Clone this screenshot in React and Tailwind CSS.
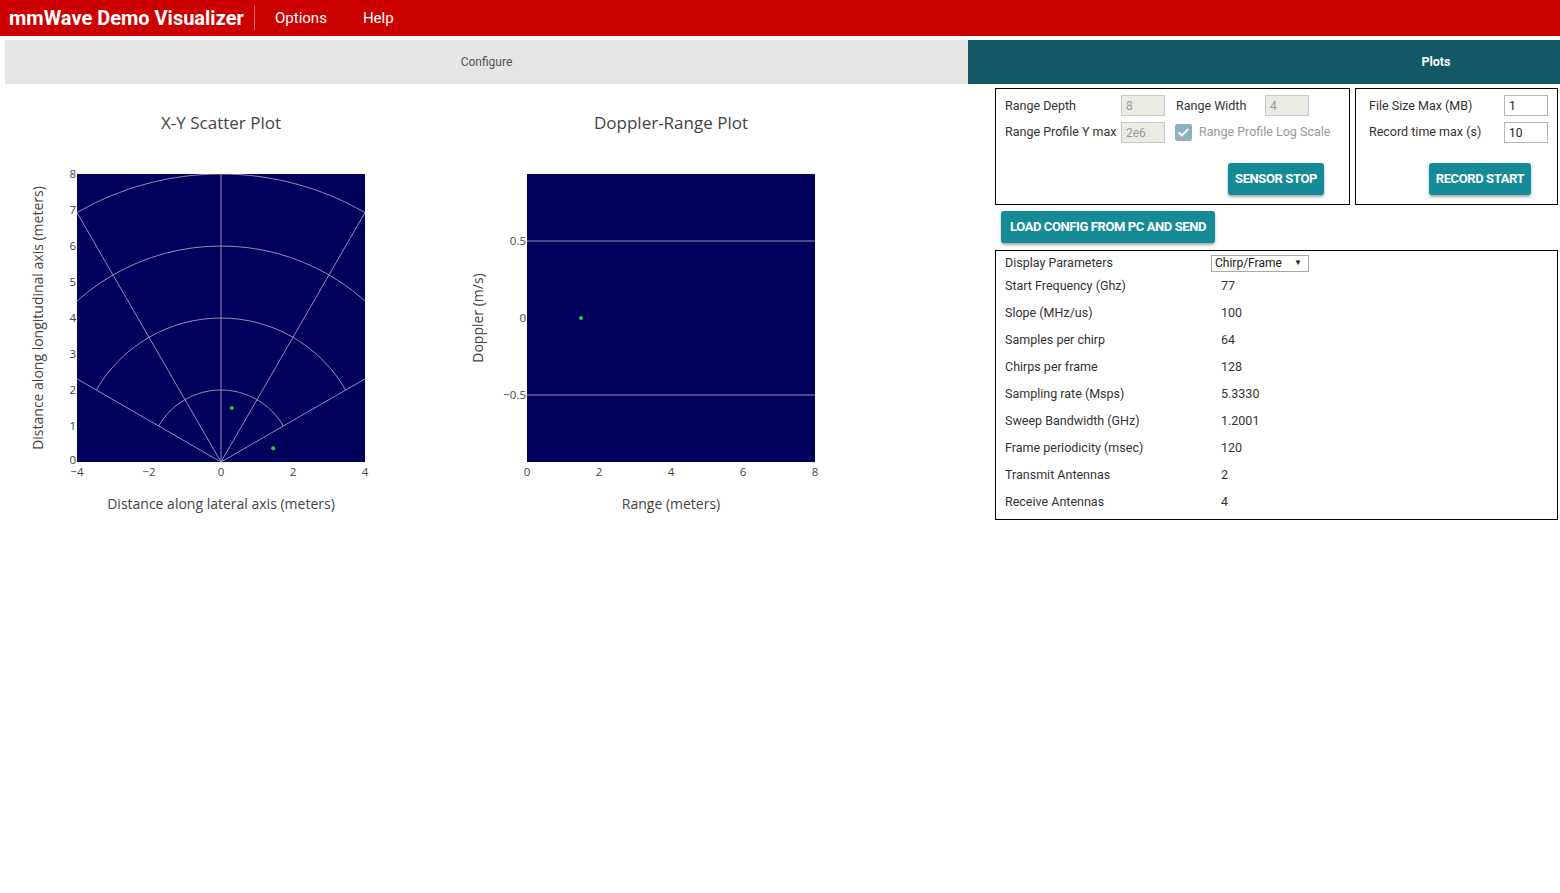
import React from "react";

const GRID = "#8f8fb4";
const NAVY = "#00005c";
const PT = "#22d04a";
const TXT = "#444";

function XYPlot() {
  const ox = 221, oy = 377, s = 36;
  const ang = [-60, -30, 0, 30, 60];
  const rad = (d) => (d * Math.PI) / 180;
  const arc = (r) => {
    const R = r * s;
    const x1 = ox + R * Math.sin(rad(-60)), y1 = oy - R * Math.cos(rad(-60));
    const x2 = ox + R * Math.sin(rad(60)), y2 = oy - R * Math.cos(rad(60));
    return `M ${x1} ${y1} A ${R} ${R} 0 0 1 ${x2} ${y2}`;
  };
  const px = (x) => 77 + (x + 4) * s;
  const py = (y) => 377 - y * s;
  return (
    <svg width="450" height="440" style={{ fontFamily: "'Open Sans', sans-serif" }}>
      <defs>
        <clipPath id="xyclip">
          <rect x="77" y="89" width="288" height="288" />
        </clipPath>
      </defs>
      <text x="221" y="44" textAnchor="middle" fontSize="17" fill={TXT}>X-Y Scatter Plot</text>
      <rect x="77" y="89" width="288" height="288" fill={NAVY} />
      <g clipPath="url(#xyclip)" stroke={GRID} strokeWidth="1" fill="none">
        {[2, 4, 6, 8].map((r) => (
          <path key={r} d={arc(r)} />
        ))}
        {ang.map((a) => (
          <line key={a} x1={ox} y1={oy} x2={ox + 8 * s * Math.sin(rad(a))} y2={oy - 8 * s * Math.cos(rad(a))} />
        ))}
      </g>
      <circle cx={px(0.3)} cy={py(1.5)} r="2" fill={PT} />
      <circle cx={px(1.45)} cy={py(0.38)} r="2" fill={PT} />
      {[0, 1, 2, 3, 4, 5, 6, 7, 8].map((v) => (
        <text key={v} x="76" y={py(v) + (v === 0 ? 2 : 4)} textAnchor="end" fontSize="11.5" fill={TXT}>{v}</text>
      ))}
      {[-4, -2, 0, 2, 4].map((v) => (
        <text key={v} x={px(v)} y="391" textAnchor="middle" fontSize="11.5" fill={TXT}>{v < 0 ? `\u2212${-v}` : v}</text>
      ))}
      <text x="221" y="424" textAnchor="middle" fontSize="14" fill={TXT}>Distance along lateral axis (meters)</text>
      <text x="0" y="0" transform="translate(43 233) rotate(-90)" textAnchor="middle" fontSize="14" fill={TXT}>Distance along longitudinal axis (meters)</text>
    </svg>
  );
}

function DopplerPlot() {
  const px = (x) => 77 + x * 36;
  const py = (v) => 233 - v * 154;
  return (
    <svg width="450" height="440" style={{ fontFamily: "'Open Sans', sans-serif" }}>
      <text x="221" y="44" textAnchor="middle" fontSize="17" fill={TXT}>Doppler-Range Plot</text>
      <rect x="77" y="89" width="288" height="288" fill={NAVY} />
      {[0.5, -0.5].map((v) => (
        <line key={v} x1="77" x2="365" y1={py(v)} y2={py(v)} stroke={GRID} strokeWidth="1" />
      ))}
      <circle cx={px(1.5)} cy={py(0)} r="2" fill={PT} />
      {[
        [0.5, "0.5"],
        [0, "0"],
        [-0.5, "\u22120.5"],
      ].map(([v, t]) => (
        <text key={t} x="76" y={py(v) + 4} textAnchor="end" fontSize="11.5" fill={TXT}>{t}</text>
      ))}
      {[0, 2, 4, 6, 8].map((v) => (
        <text key={v} x={px(v)} y="391" textAnchor="middle" fontSize="11.5" fill={TXT}>{v}</text>
      ))}
      <text x="221" y="424" textAnchor="middle" fontSize="14" fill={TXT}>Range (meters)</text>
      <text x="0" y="0" transform="translate(33 233) rotate(-90)" textAnchor="middle" fontSize="14" fill={TXT}>Doppler (m/s)</text>
    </svg>
  );
}

function DisabledInput({ value }) {
  return (
    <div className="w-[44px] h-[21px] bg-[#ebebe4] border border-[#c9c9c9] text-[12px] text-[#999] pl-[4px] flex items-center">
      {value}
    </div>
  );
}

function WhiteInput({ value }) {
  return (
    <div className="w-[44px] h-[21px] bg-white border border-[#b5b5b5] text-[12px] text-[#222] pl-[4px] flex items-center">
      {value}
    </div>
  );
}

function TealButton({ children, className = "" }) {
  return (
    <div
      className={
        "h-[32px] rounded-[3px] bg-[#168b98] text-white text-[13px] font-bold tracking-[-0.4px] flex items-center justify-center shadow-[0_2px_3px_rgba(0,0,0,0.35)] " +
        className
      }
    >
      {children}
    </div>
  );
}

const params = [
  ["Start Frequency (Ghz)", "77"],
  ["Slope (MHz/us)", "100"],
  ["Samples per chirp", "64"],
  ["Chirps per frame", "128"],
  ["Sampling rate (Msps)", "5.3330"],
  ["Sweep Bandwidth (GHz)", "1.2001"],
  ["Frame periodicity (msec)", "120"],
  ["Transmit Antennas", "2"],
  ["Receive Antennas", "4"],
];

export default function App() {
  return (
    <div className="w-[1560px] h-[893px] bg-white overflow-hidden" style={{ fontFamily: "Roboto, 'Liberation Sans', sans-serif" }}>
      {/* Header */}
      <div className="h-[36px] bg-[#cc0000] flex items-center text-white">
        <div className="pl-[9px] text-[20px] font-bold leading-none w-[254px]">mmWave Demo Visualizer</div>
        <div className="w-px h-[24px] bg-[#e86a6a]" />
        <div className="ml-[20px] text-[15px]">Options</div>
        <div className="ml-[36px] text-[15px]">Help</div>
      </div>
      {/* Tabs */}
      <div className="mt-[4px] ml-[5px] h-[44px] flex">
        <div className="w-[963px] bg-[#e5e5e5] flex items-center justify-center text-[12px] text-[#555]">Configure</div>
        <div className="flex-1 bg-[#125866] flex items-center justify-center text-[12.5px] font-bold text-white pl-[344px]">Plots</div>
      </div>
      {/* Main */}
      <div className="flex">
        <div className="w-[995px] flex pt-[1px]">
          <XYPlot />
          <DopplerPlot />
        </div>
        <div className="w-[563px] pt-[4px] text-[12.5px] text-[#333]">
          <div className="flex gap-[5px]">
            <div className="w-[355px] h-[117px] border border-black pt-[6px] pl-[9px]">
              <div className="flex items-center">
                <div className="w-[116px] pt-[1px]">Range Depth</div>
                <DisabledInput value="8" />
                <div className="w-[89px] ml-[11px] pt-[1px]">Range Width</div>
                <DisabledInput value="4" />
              </div>
              <div className="flex items-center mt-[6px]">
                <div className="w-[116px]">Range Profile Y max</div>
                <DisabledInput value="2e6" />
                <div className="ml-[10px] w-[17px] h-[17px] rounded-[2px] bg-[#8fb0bd] flex items-center justify-center">
                  <svg width="13" height="13" viewBox="0 0 24 24" fill="none" stroke="white" strokeWidth="3.5" strokeLinecap="round" strokeLinejoin="round">
                    <path d="M4 12.5l5 5L20 6.5" />
                  </svg>
                </div>
                <div className="ml-[7px] text-[#999]">Range Profile Log Scale</div>
              </div>
              <div className="flex justify-end pr-[25px] mt-[20px]">
                <TealButton className="w-[96px]">SENSOR STOP</TealButton>
              </div>
            </div>
            <div className="w-[203px] h-[117px] border border-black pt-[6px] pl-[13px]">
              <div className="flex items-center">
                <div className="w-[135px] pt-[1px]">File Size Max (MB)</div>
                <WhiteInput value="1" />
              </div>
              <div className="flex items-center mt-[6px]">
                <div className="w-[135px]">Record time max (s)</div>
                <WhiteInput value="10" />
              </div>
              <div className="mt-[20px] ml-[60px]">
                <TealButton className="w-[102px]">RECORD START</TealButton>
              </div>
            </div>
          </div>
          <div className="mt-[6px] ml-[6px]">
            <TealButton className="w-[214px]">LOAD CONFIG FROM PC AND SEND</TealButton>
          </div>
          <div className="mt-[7px] h-[270px] border border-black pl-[9px] pt-[2px]">
            <div className="h-[20px] flex items-center">
              <div className="w-[206px]">Display Parameters</div>
              <div className="w-[98px] h-[17px] border border-[#aaa] flex items-center pl-[3px] text-[12px] text-[#222]">
                <span>Chirp/Frame</span>
                <span className="ml-auto mr-[6px] text-[8px]">▼</span>
              </div>
            </div>
            {params.map(([k, v]) => (
              <div key={k} className="h-[27px] flex items-center">
                <div className="w-[216px]">{k}</div>
                <div>{v}</div>
              </div>
            ))}
          </div>
        </div>
      </div>
    </div>
  );
}
